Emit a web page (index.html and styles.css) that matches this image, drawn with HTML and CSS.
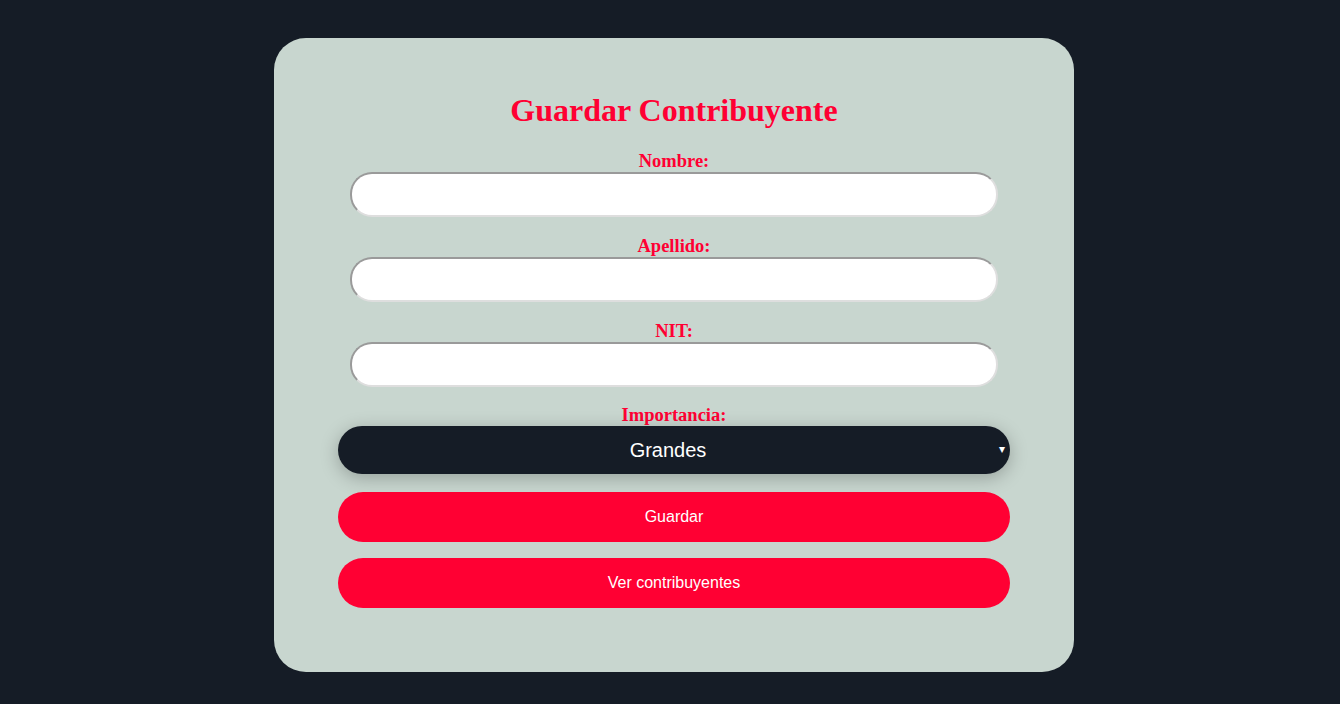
FILE: index.html
```html
<!DOCTYPE html>
<html lang="es">
<head>
<meta charset="utf-8">
<title>Guardar Contribuyente</title>
<link rel="stylesheet" href="styles.css">
</head>
<body>
<main class="page">
  <form class="card">
    <h1 class="title">Guardar Contribuyente</h1>
    <div class="field">
      <label class="label" for="nombre">Nombre:</label>
      <input class="input" id="nombre" type="text">
    </div>
    <div class="field">
      <label class="label" for="apellido">Apellido:</label>
      <input class="input" id="apellido" type="text">
    </div>
    <div class="field">
      <label class="label" for="nit">NIT:</label>
      <input class="input" id="nit" type="text">
    </div>
    <div class="field field-select">
      <label class="label label-select" for="imp">Importancia:</label>
      <div class="select-wrap">
        <select class="select" id="imp">
          <option>Grandes</option>
          <option>Medianos</option>
          <option>Pequeños</option>
        </select>
        <span class="arrow">▾</span>
      </div>
    </div>
    <button class="btn" type="button">Guardar</button>
    <button class="btn" type="button">Ver contribuyentes</button>
  </form>
</main>
</body>
</html>
```
FILE: styles.css
```css
* { box-sizing: border-box; }
html, body { margin: 0; padding: 0; }
body {
  background: #151c26;
  height: 704px;
  overflow: hidden;
}
.page {
  display: flex;
  justify-content: center;
  padding: 38px 0 0 8px;
}
.card {
  width: 800px;
  height: 634px;
  flex-shrink: 0;
  background: #c8d6cf;
  border-radius: 32px;
  padding: 54px 64px 64px;
  display: flex;
  flex-direction: column;
}
.title {
  margin: 0 0 21px;
  font-family: "Liberation Serif", serif;
  font-weight: bold;
  font-size: 32px;
  line-height: 37px;
  color: #ff0033;
  text-align: center;
  flex-shrink: 0;
}
.field {
  display: flex;
  flex-direction: column;
  align-items: center;
  margin-bottom: 18px;
  flex-shrink: 0;
}
.label {
  font-family: "Liberation Serif", serif;
  font-weight: bold;
  font-size: 18.5px;
  line-height: 22px;
  color: #ff0033;
  text-align: center;
}
.label-select { line-height: 21px; }
.input {
  width: 648px;
  height: 45px;
  border-radius: 22px;
  border-style: solid;
  border-width: 2px;
  border-color: #9a9a9a #dedede #dedede #9a9a9a;
  background: #fff;
  font-family: "Liberation Sans", sans-serif;
  font-size: 16px;
  padding: 0 14px;
  outline: none;
}
.select-wrap {
  position: relative;
  width: 672px;
}
.select {
  display: block;
  width: 100%;
  height: 48px;
  border: none;
  border-radius: 24px;
  background: #151c26;
  color: #fff;
  font-family: "Liberation Sans", sans-serif;
  font-size: 20px;
  text-align: center;
  text-align-last: center;
  padding: 0 12px 0 0;
  appearance: none;
  -webkit-appearance: none;
  box-shadow: 0 4px 18px rgba(0, 0, 0, 0.25);
  outline: none;
}
.arrow {
  position: absolute;
  right: 5px;
  top: 15px;
  color: #fff;
  font-family: "DejaVu Sans", sans-serif;
  font-size: 12px;
  line-height: 16px;
  pointer-events: none;
}
.btn {
  width: 672px;
  height: 50px;
  flex-shrink: 0;
  border: none;
  border-radius: 25px;
  background: #ff0033;
  color: #fff;
  font-family: "Liberation Sans", sans-serif;
  font-size: 16px;
  margin-bottom: 16px;
  cursor: pointer;
}
```
